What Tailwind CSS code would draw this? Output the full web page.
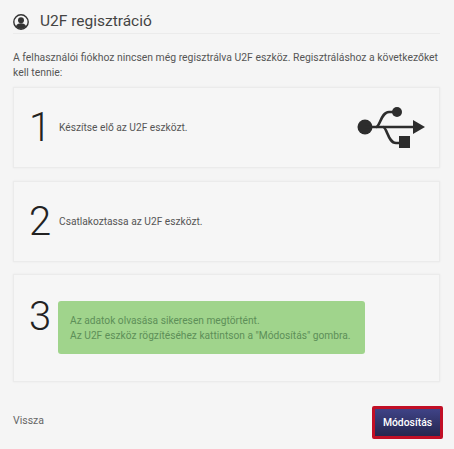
<!DOCTYPE html>
<html lang="hu">
<head>
    <meta charset="UTF-8">
    <title>U2F regisztráció</title>
    <script src="https://cdn.jsdelivr.net/npm/@tailwindcss/browser@4"></script>
</head>
<body class="bg-[#f5f5f5] font-['Roboto',sans-serif] text-[#555] w-[454px] h-[449px] overflow-hidden">
    <div class="ml-[13px] w-[427px]">
        <header class="flex items-center h-[23px] mt-[11px] border-b border-[#ebebeb]">
            <svg class="w-[16px] h-[16px] mb-px" viewBox="0 0 16 16">
                <circle cx="8" cy="8" r="7.2" fill="none" stroke="#333" stroke-width="1.4"/>
                <circle cx="8" cy="6.2" r="3" fill="#333"/>
                <path d="M2.8 12.6c.8-2.6 2.8-3.4 5.2-3.4s4.4.8 5.2 3.4A7 7 0 0 1 8 15a7 7 0 0 1-5.2-2.400z" fill="#333"/>
            </svg>
            <h1 class="ml-[11px] text-[15.5px] text-[#444]">U2F regisztráció</h1>
        </header>
        <p class="mt-[16px] text-[10.4px] leading-[15px]">A felhasználói fiókhoz nincsen még regisztrálva U2F eszköz. Regisztráláshoz a következőket kell tennie:</p>

        <section class="mt-[7px] h-[81px] flex items-center bg-[#f6f6f6] border border-[#ebebeb] shadow-[0_0_2px_rgba(0,0,0,0.06)]">
            <span class="ml-[15px] w-[30px] text-[40px] leading-none font-light text-[#222]">1</span>
            <span class="text-[10.2px]">Készítse elő az U2F eszközt.</span>
            <svg class="ml-auto mr-[13px] mb-[2px] w-[69px] h-[42px]" viewBox="0 0 69 42">
                <circle cx="8" cy="21" r="7.500" fill="#2d2d2d"/>
                <path d="M8 21h50" stroke="#2d2d2d" stroke-width="2.6"/>
                <path d="M56 14l12 7-12 7z" fill="#2d2d2d"/>
                <path d="M19 21c4 0 5-15 13-15h8" fill="none" stroke="#2d2d2d" stroke-width="2.6"/>
                <path d="M26 21c4 0 5 16 13 16h5" fill="none" stroke="#2d2d2d" stroke-width="2.6"/>
                <circle cx="40" cy="6" r="5" fill="#2d2d2d"/>
                <rect x="42" y="30" width="11" height="12" fill="#2d2d2d"/>
            </svg>
        </section>

        <section class="mt-[13px] h-[81px] flex items-center bg-[#f6f6f6] border border-[#ebebeb] shadow-[0_0_2px_rgba(0,0,0,0.06)]">
            <span class="ml-[15px] w-[30px] text-[40px] leading-none font-light text-[#222]">2</span>
            <span class="text-[10.2px]">Csatlakoztassa az U2F eszközt.</span>
        </section>

        <section class="mt-[12px] h-[108px] flex items-start bg-[#f6f6f6] border border-[#ebebeb] shadow-[0_0_2px_rgba(0,0,0,0.06)]">
            <span class="ml-[15px] mt-[22px] w-[29px] text-[40px] leading-none font-light text-[#222]">3</span>
            <div class="mt-[26px] w-[307px] h-[53px] pl-[12px] pt-[12px] rounded-[3px] bg-[#a0d48c] text-[#5d8f58] text-[10.2px] leading-[15px]">
                <p>Az adatok olvasása sikeresen megtörtént.</p>
                <p>Az U2F eszköz rögzítéséhez kattintson a "Módosítás" gombra.</p>
            </div>
        </section>

        <footer class="mt-[24px] flex items-center justify-between">
            <a class="text-[10.5px] text-[#666] mb-[3px]">Vissza</a>
            <button class="mr-[-3px] w-[71px] h-[33px] border-[3px] border-[#c10f26] rounded-[2px] bg-gradient-to-b from-[#3f4387] to-[#25264f] text-white text-[10.4px] font-medium">Módosítás</button>
        </footer>
    </div>
</body>
</html>
